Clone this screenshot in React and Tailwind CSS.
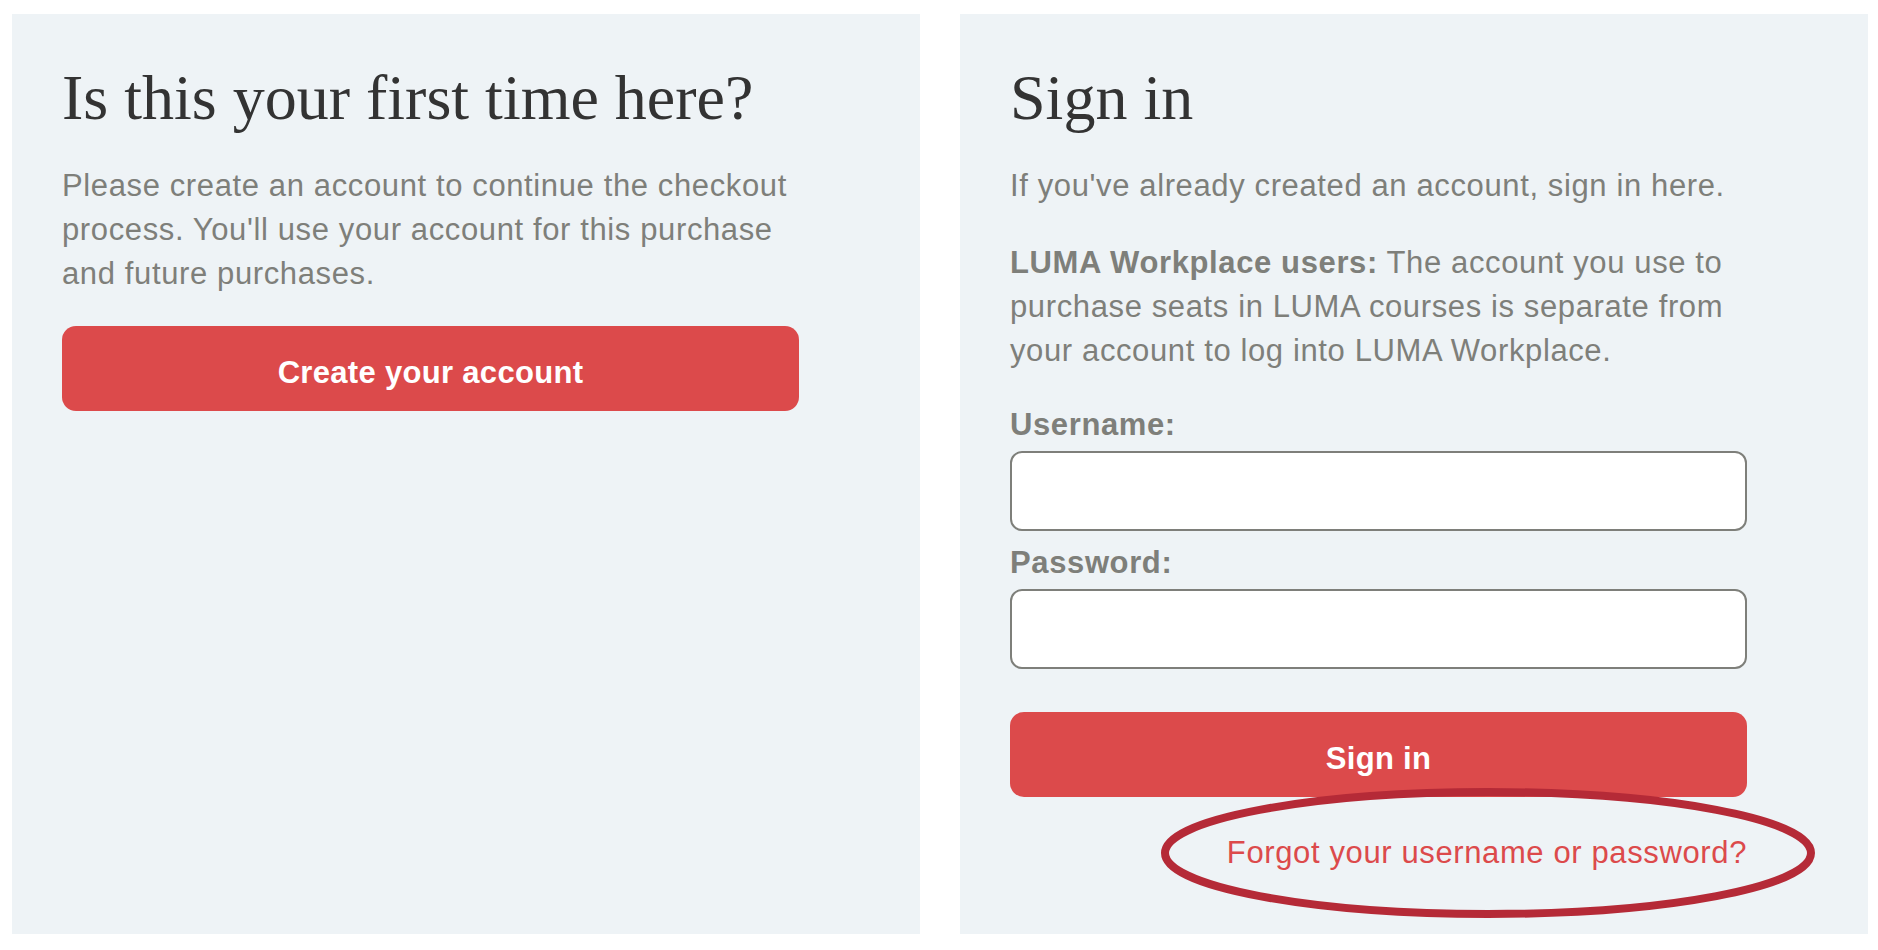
import React from 'react';

const SANS = "font-['Liberation_Sans',Arial,sans-serif]";
const SERIF = "font-['Liberation_Serif','Times_New_Roman',serif]";

function Panel({ children }) {
  return (
    <section className="relative w-[908px] h-[920px] bg-[#eef3f6] pl-[50px] pt-[52px]">
      {children}
    </section>
  );
}

function Title({ children }) {
  return (
    <h1 className={`${SERIF} text-[64px] leading-[64px] text-[#333333] font-normal`}>
      {children}
    </h1>
  );
}

function Body({ children, className = '' }) {
  return (
    <p className={`text-[31px] leading-[44px] tracking-[0.02em] text-[#7e7f7a] ${className}`}>
      {children}
    </p>
  );
}

function RedButton({ children }) {
  return (
    <button
      type="button"
      className="w-[737px] h-[85px] pt-[10px] rounded-[14px] bg-[#dc4a4b] text-white font-bold text-[31px] tracking-[0.01em]"
    >
      {children}
    </button>
  );
}

function Field({ label, type, className = '' }) {
  return (
    <div className={className}>
      <label className="block mb-[4px] text-[31px] leading-[44px] tracking-[0.02em] font-bold text-[#7e7f7a]">
        {label}
      </label>
      <input
        type={type}
        className="block w-[737px] h-[80px] bg-white border-2 border-[#7e7f7a] rounded-[12px] px-4 text-[28px]"
      />
    </div>
  );
}

export default function App() {
  return (
    <div className={`${SANS} min-h-[950px] bg-white flex gap-[40px] pl-[12px] pt-[14px]`}>
      <Panel>
        <Title>Is this your first time here?</Title>
        <div className="w-[737px]">
          <Body className="mt-[34px]">
            Please create an account to continue the checkout process. You'll use your account for this
            purchase and future purchases.
          </Body>
          <div className="mt-[30px]">
            <RedButton>Create your account</RedButton>
          </div>
        </div>
      </Panel>

      <Panel>
        <Title>Sign in</Title>
        <div className="w-[737px]">
          <Body className="mt-[34px]">If you've already created an account, sign in here.</Body>
          <Body className="mt-[33px]">
            <span className="font-bold">LUMA Workplace users:</span> The account you use to purchase
            seats in LUMA courses is separate from your account to log into LUMA Workplace.
          </Body>
          <div className="mt-[30px] flex flex-col gap-[10px]">
            <Field label="Username:" type="text" />
            <Field label="Password:" type="password" />
          </div>
          <div className="mt-[43px]">
            <RedButton>Sign in</RedButton>
          </div>
          <div className="mt-[34px] text-right">
            <a className="text-[31px] leading-[44px] tracking-[0.02em] text-[#dc4a4b]">
              Forgot your username or password?
            </a>
          </div>
        </div>

        {/* hand-drawn highlight around the reset link */}
        <svg className="absolute inset-0 w-full h-full pointer-events-none" viewBox="0 0 908 920">
          <ellipse cx="528" cy="839" rx="323" ry="61" fill="none" stroke="#b52a37" strokeWidth="8" />
        </svg>
      </Panel>
    </div>
  );
}
